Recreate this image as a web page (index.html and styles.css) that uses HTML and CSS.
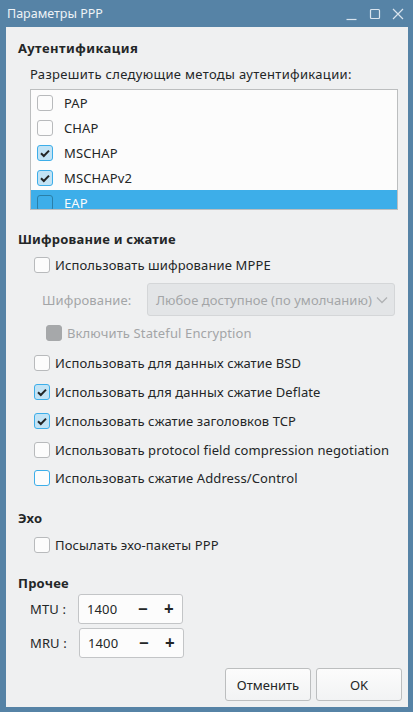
FILE: index.html
```html
<!DOCTYPE html>
<html lang="ru">
<head>
<meta charset="utf-8">
<link rel="stylesheet" href="styles.css">
</head>
<body>
<div class="window">
  <div class="titlebar">
    <span class="title">Параметры PPP</span>
    <div class="wm">
      <svg class="wm-btn" width="14" height="14" viewBox="0 0 14 14"><path d="M1.5 12.5h10" stroke="#d9e4ee" stroke-width="1.2" fill="none"/></svg>
      <svg class="wm-btn" width="14" height="14" viewBox="0 0 14 14"><rect x="2.5" y="2.5" width="9" height="9" rx="1" stroke="#d9e4ee" stroke-width="1.2" fill="none"/></svg>
      <svg class="wm-btn" width="14" height="14" viewBox="0 0 14 14"><path d="M2 2l10 10M12 2L2 12" stroke="#d9e4ee" stroke-width="1.2" fill="none"/></svg>
    </div>
  </div>
  <div class="content">
    <div class="heading h1">Аутентификация</div>
    <div class="label lbl-methods">Разрешить следующие методы аутентификации:</div>
    <div class="listbox">
      <div class="li"><span class="cb"></span><span>PAP</span></div>
      <div class="li"><span class="cb"></span><span>CHAP</span></div>
      <div class="li"><span class="cb checked"><svg width="14" height="14" viewBox="0 0 14 14"><path d="M3 7.2l2.8 2.8L11 4.6" stroke="#232627" stroke-width="2" fill="none"/></svg></span><span>MSCHAP</span></div>
      <div class="li"><span class="cb checked"><svg width="14" height="14" viewBox="0 0 14 14"><path d="M3 7.2l2.8 2.8L11 4.6" stroke="#232627" stroke-width="2" fill="none"/></svg></span><span>MSCHAPv2</span></div>
      <div class="li selected"><span class="cb sel"></span><span>EAP</span></div>
    </div>

    <div class="heading h2">Шифрование и сжатие</div>
    <div class="row r-mppe"><span class="cb"></span><span>Использовать шифрование MPPE</span></div>
    <div class="combo-row">
      <span class="dis-label">Шифрование:</span>
      <div class="combo"><span>Любое доступное (по умолчанию)</span>
        <svg width="12" height="8" viewBox="0 0 12 8"><path d="M1 1.5l5 5 5-5" stroke="#b0b2b4" stroke-width="1.3" fill="none"/></svg>
      </div>
    </div>
    <div class="row r-stateful disabled"><span class="cb dis"></span><span>Включить Stateful Encryption</span></div>
    <div class="row r-bsd"><span class="cb"></span><span>Использовать для данных сжатие BSD</span></div>
    <div class="row r-next"><span class="cb checked"><svg width="14" height="14" viewBox="0 0 14 14"><path d="M3 7.2l2.8 2.8L11 4.6" stroke="#232627" stroke-width="2" fill="none"/></svg></span><span>Использовать для данных сжатие Deflate</span></div>
    <div class="row r-next"><span class="cb checked"><svg width="14" height="14" viewBox="0 0 14 14"><path d="M3 7.2l2.8 2.8L11 4.6" stroke="#232627" stroke-width="2" fill="none"/></svg></span><span>Использовать сжатие заголовков TCP</span></div>
    <div class="row r-next"><span class="cb"></span><span>Использовать protocol field compression negotiation</span></div>
    <div class="row r-addr"><span class="cb focus"></span><span>Использовать сжатие Address/Control</span></div>

    <div class="heading h3">Эхо</div>
    <div class="row r-echo"><span class="cb"></span><span>Посылать эхо-пакеты PPP</span></div>

    <div class="heading h4">Прочее</div>
    <div class="spin-row r-mtu">
      <span class="spin-label">MTU :</span>
      <div class="spin"><span class="val">1400</span><span class="pm">−</span><span class="pm">+</span></div>
    </div>
    <div class="spin-row r-mru">
      <span class="spin-label">MRU :</span>
      <div class="spin spin2"><span class="val">1400</span><span class="pm">−</span><span class="pm">+</span></div>
    </div>

    <div class="buttons">
      <button class="btn">Отменить</button>
      <button class="btn">OK</button>
    </div>
  </div>
</div>
</body>
</html>
```

FILE: styles.css
```css
* { box-sizing: border-box; }
html, body { margin: 0; padding: 0; }
body {
  width: 413px;
  height: 712px;
  background: #5683a6;
  font-family: "Noto Sans", "Open Sans", sans-serif;
  font-size: 13px;
  letter-spacing: 0.12px;
  color: #232627;
  overflow: hidden;
}
.window {
  display: flex;
  flex-direction: column;
  height: 712px;
}
.titlebar {
  height: 27px;
  display: flex;
  align-items: center;
  justify-content: space-between;
  padding: 0 8px 0 7px;
}
.title {
  color: #eef3f7;
  font-size: 12.5px;
  letter-spacing: 0;
  line-height: 18px;
  margin-top: 1px;
}
.wm { display: flex; gap: 9px; align-items: center; margin-top: 1px; }
.wm-btn { display: block; }
.content {
  flex: 1;
  margin: 0 5px 5px 6px;
  background: #eff0f1;
  padding: 12px 6px 0 12px;
  display: flex;
  flex-direction: column;
}
.heading {
  font-weight: bold;
  line-height: 18px;
  height: 18px;
  letter-spacing: 0.22px;
}
.h1 { letter-spacing: 0.45px; }
.h2 { margin-top: 20px; }
.h3 { margin-top: 19px; }
.h4 { margin-top: 17px; }
.label { line-height: 18px; }
.lbl-methods { margin-top: 8px; padding-left: 12px; letter-spacing: 0.32px; }
.listbox {
  margin: 6px 4px 0 12px;
  height: 121px;
  background: #fcfcfc;
  border: 1px solid #bcbebf;
  overflow: hidden;
}
.li {
  height: 25px;
  display: flex;
  align-items: center;
  padding-left: 6px;
}
.li .cb { margin-right: 11px; }
.li.selected { background: #3daee9; color: #fcfcfc; height: 25px; }
.cb {
  width: 16px;
  height: 16px;
  flex: none;
  border: 1px solid #b8babc;
  border-radius: 3px;
  background: #fcfcfc;
  display: inline-flex;
  align-items: center;
  justify-content: center;
}
.cb.checked { background: #c2e3f5; border-color: #3daee9; }
.cb.sel { background: #3daee9; border-color: #2a7fa8; }
.cb.focus { border-color: #3daee9; }
.cb.dis { background: #a6a8aa; border-color: #a6a8aa; }
.row {
  height: 24px;
  display: flex;
  align-items: center;
  padding-left: 16px;
}
.row .cb { margin-right: 5px; }
.r-mppe { margin-top: 5px; }
.r-stateful { margin-top: 5px; padding-left: 28px; }
.disabled { color: #a3a5a7; }
.r-bsd { margin-top: 6px; }
.r-next { margin-top: 5px; }
.r-addr { margin-top: 4px; }
.r-echo { margin-top: 6px; }
.combo-row {
  margin-top: 6px;
  height: 33px;
  display: flex;
  align-items: center;
  padding-left: 24px;
}
.dis-label { color: #a3a5a7; width: 105px; flex: none; }
.combo {
  width: 248px;
  height: 33px;
  border: 1px solid #d4d6d8;
  border-radius: 3px;
  background: #e3e5e7;
  color: #a3a5a7;
  display: flex;
  align-items: center;
  justify-content: space-between;
  padding: 0 6px 0 8px;
  letter-spacing: 0.05px;
}
.combo svg { display: block; }
.spin-row {
  height: 30px;
  display: flex;
  align-items: center;
  padding-left: 12px;
}
.r-mtu { margin-top: 2px; }
.r-mru { margin-top: 4px; }
.spin-label { width: 48px; flex: none; }
.spin {
  width: 105px;
  height: 30px;
  background: #fcfcfc;
  border: 1px solid #c3c5c7;
  border-radius: 3px;
  display: flex;
  align-items: center;
  padding-left: 8px;
}
.spin2 { margin-left: 1px; }
.val { width: 46px; }
.pm { width: 28px; text-align: center; font-size: 17px; font-weight: bold; line-height: 18px; }
.buttons {
  margin-top: 10px;
  display: flex;
  justify-content: flex-end;
  gap: 5px;
}
.btn {
  width: 86px;
  height: 33px;
  border: 1px solid #bcbebf;
  border-radius: 3px;
  background: linear-gradient(#fcfcfc, #f2f3f4);
  font-family: "Noto Sans", "Open Sans", sans-serif;
  font-size: 13px;
  color: #232627;
  padding: 0;
}
```
